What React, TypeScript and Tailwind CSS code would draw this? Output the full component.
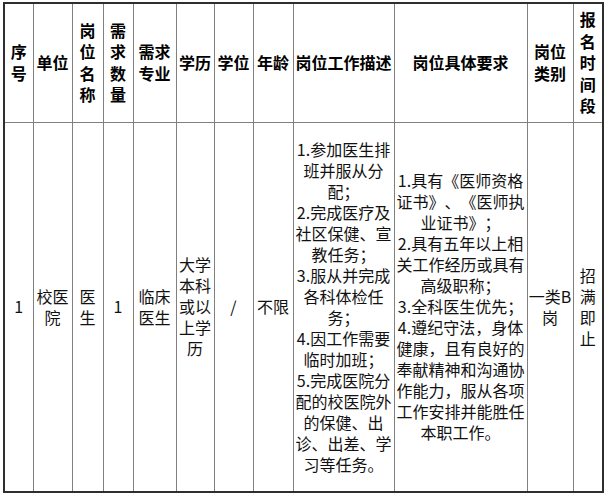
const font = { fontFamily: '"Noto Sans CJK SC", "Noto Sans", sans-serif' };

const cols = [29, 39, 31, 30, 43, 38, 39, 40, 101, 133, 46, 30];

const headers = ["序号", "单位", "岗位名称", "需求数量", "需求专业", "学历", "学位", "年龄", "岗位工作描述", "岗位具体要求", "岗位类别", "报名时间段"];

const duties = [
  "1.参加医生排班并服从分配；",
  "2.完成医疗及社区保健、宣教任务；",
  "3.服从并完成各科体检任务；",
  "4.因工作需要临时加班；",
  "5.完成医院分配的校医院外的保健、出诊、出差、学习等任务。",
];

const reqs = [
  "1.具有《医师资格证书》、《医师执业证书》；",
  "2.具有五年以上相关工作经历或具有高级职称；",
  "3.全科医生优先；",
  "4.遵纪守法，身体健康，且有良好的奉献精神和沟通协作能力，服从各项工作安排并能胜任本职工作。",
];

const Lines = ({ items }: { items: string[] }) => (
  <>
    {items.map((t) => (
      <div key={t}>{t}</div>
    ))}
  </>
);

export default function App() {
  const cell = "border border-[#808080] px-[1px] text-center align-middle";
  return (
    <div className="bg-white w-[609px] h-[496px] pt-[2px] pl-[3px] [text-spacing-trim:space-all]" style={font}>
      <table className="table-fixed border-collapse border-2 border-[#2e2e2e] w-[601px] text-[16px] text-[#111]">
        <colgroup>
          {cols.map((w, i) => (
            <col key={i} style={{ width: w }} />
          ))}
        </colgroup>
        <thead>
          <tr className="h-[119px]">
            {headers.map((h) => (
              <th key={h} className={`${cell} font-bold leading-[21.5px] text-black`}>
                {h}
              </th>
            ))}
          </tr>
        </thead>
        <tbody className="leading-[21px]">
          <tr className="h-[370px]">
            <td className={cell}>1</td>
            <td className={cell}>校医院</td>
            <td className={cell}>医生</td>
            <td className={cell}>1</td>
            <td className={cell}>临床医生</td>
            <td className={cell}>大学本科或以上学历</td>
            <td className={cell}>/</td>
            <td className={cell}>不限</td>
            <td className={cell}>
              <Lines items={duties} />
            </td>
            <td className={cell}>
              <Lines items={reqs} />
            </td>
            <td className="border border-[#808080] px-0 text-center align-middle">一类B岗</td>
            <td className={cell}>招满即止</td>
          </tr>
        </tbody>
      </table>
    </div>
  );
}
